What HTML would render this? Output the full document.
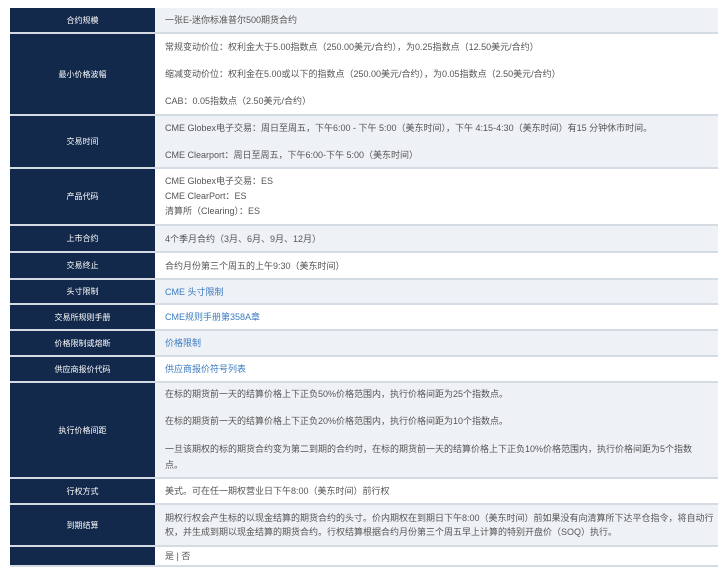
<!DOCTYPE html><html><head><meta charset="utf-8"><style>
body{margin:0;width:720px;height:556px;background:#fff;overflow:hidden;font-family:"Liberation Sans","Noto Sans CJK SC",sans-serif;}
.r{position:absolute;left:10px;width:708px;display:flex;border-bottom:2px solid #d5dbe3;box-sizing:border-box}
.l{width:145px;background:#13294b;color:#fff;font-size:8px;display:flex;align-items:center;justify-content:center;flex:none}
.c{flex:1;padding:0 0 0 10px;font-size:9px;color:#555;display:flex;flex-direction:column;justify-content:center;line-height:14px}
.g .c{background:#eef1f5}.w .c{background:#fff}
a{color:#3a7bc0;text-decoration:none}
p{margin:0}
</style></head><body>
<div class="r g" style="top:8px;height:26px"><div class="l">合约规模</div><div class="c">一张E-迷你标准普尔500期货合约</div></div>
<div class="r w" style="top:34px;height:82px"><div class="l">最小价格波幅</div><div class="c"><p>常规变动价位：权利金大于5.00指数点（250.00美元/合约），为0.25指数点（12.50美元/合约）</p><p style="margin-top:13px">缩减变动价位：权利金在5.00或以下的指数点（250.00美元/合约），为0.05指数点（2.50美元/合约）</p><p style="margin-top:13px">CAB：0.05指数点（2.50美元/合约）</p></div></div>
<div class="r g" style="top:116px;height:53px"><div class="l">交易时间</div><div class="c"><p>CME Globex电子交易：周日至周五，下午6:00 - 下午 5:00（美东时间），下午 4:15-4:30（美东时间）有15 分钟休市时间。</p><p style="margin-top:13px">CME Clearport：周日至周五，下午6:00-下午 5:00（美东时间）</p></div></div>
<div class="r w" style="top:169px;height:57px"><div class="l">产品代码</div><div class="c" style="line-height:15px"><p>CME Globex电子交易：ES</p><p>CME ClearPort：ES</p><p>清算所（Clearing）：ES</p></div></div>
<div class="r g" style="top:226px;height:27px"><div class="l">上市合约</div><div class="c">4个季月合约（3月、6月、9月、12月）</div></div>
<div class="r w" style="top:253px;height:27px"><div class="l">交易终止</div><div class="c">合约月份第三个周五的上午9:30（美东时间）</div></div>
<div class="r g" style="top:280px;height:25px"><div class="l">头寸限制</div><div class="c"><a>CME 头寸限制</a></div></div>
<div class="r w" style="top:305px;height:26px"><div class="l">交易所规则手册</div><div class="c"><a>CME规则手册第358A章</a></div></div>
<div class="r g" style="top:331px;height:26px"><div class="l">价格限制或熔断</div><div class="c"><a>价格限制</a></div></div>
<div class="r w" style="top:357px;height:26px"><div class="l">供应商报价代码</div><div class="c"><a>供应商报价符号列表</a></div></div>
<div class="r g" style="top:383px;height:96px"><div class="l">执行价格间距</div><div class="c" style="padding-right:18px"><p>在标的期货前一天的结算价格上下正负50%价格范围内，执行价格间距为25个指数点。</p><p style="margin-top:13px">在标的期货前一天的结算价格上下正负20%价格范围内，执行价格间距为10个指数点。</p><p style="margin-top:13px;line-height:16px">一旦该期权的标的期货合约变为第二到期的合约时，在标的期货前一天的结算价格上下正负10%价格范围内，执行价格间距为5个指数点。</p></div></div>
<div class="r w" style="top:479px;height:26px"><div class="l">行权方式</div><div class="c">美式。可在任一期权营业日下午8:00（美东时间）前行权</div></div>
<div class="r g" style="top:505px;height:42px"><div class="l">到期结算</div><div class="c">期权行权会产生标的以现金结算的期货合约的头寸。价内期权在到期日下午8:00（美东时间）前如果没有向清算所下达平仓指令，将自动行权，并生成到期以现金结算的期货合约。行权结算根据合约月份第三个周五早上计算的特别开盘价（SOQ）执行。</div></div>
<div class="r w" style="top:547px;height:20px"><div class="l"></div><div class="c" style="justify-content:flex-start;padding-top:2px">是 | 否</div></div>
</body></html>
